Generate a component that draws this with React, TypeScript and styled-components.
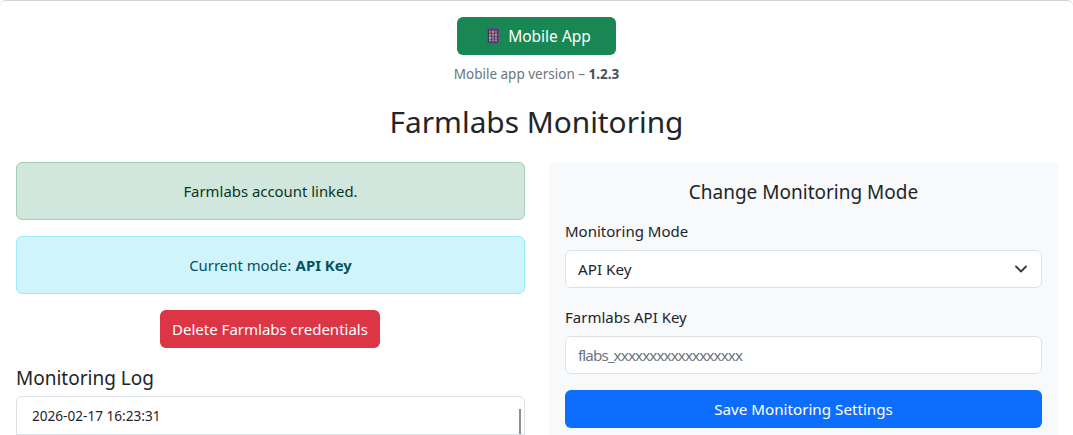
import React from "react";
import styled, { createGlobalStyle } from "styled-components";

const Global = createGlobalStyle`
  * { box-sizing: border-box; }
  html, body {
    margin: 0;
    height: 435px;
    overflow: hidden;
    background: #fff;
  }
  body {
    font-family: "Noto Sans", "Open Sans", sans-serif;
    font-size: 16px;
    line-height: 24px;
    color: #212529;
  }
`;

const PhoneIcon = () => (
  <svg width="12" height="16" viewBox="0 0 12 16" aria-hidden="true">
    <rect x="0" y="0" width="12" height="16" rx="1.5" fill="#55508a" />
    <rect x="1.2" y="1.6" width="9.6" height="12.8" fill="#3a3560" />
    <rect x="2" y="2.6" width="2.2" height="2.2" fill="#d8607a" />
    <rect x="4.9" y="2.6" width="2.2" height="2.2" fill="#d99a5e" />
    <rect x="7.8" y="2.6" width="2.2" height="2.2" fill="#c25c9a" />
    <rect x="2" y="5.6" width="2.2" height="2.2" fill="#6a9be0" />
    <rect x="4.9" y="5.6" width="2.2" height="2.2" fill="#e3786a" />
    <rect x="7.8" y="5.6" width="2.2" height="2.2" fill="#72b98a" />
    <rect x="2" y="8.6" width="2.2" height="2.2" fill="#d8b04f" />
    <rect x="4.9" y="8.6" width="2.2" height="2.2" fill="#8e7ad0" />
    <rect x="7.8" y="8.6" width="2.2" height="2.2" fill="#e06a6a" />
    <rect x="2" y="11.4" width="2.2" height="2" fill="#7f9ad0" />
    <rect x="4.9" y="11.4" width="2.2" height="2" fill="#c9708a" />
    <rect x="7.8" y="11.4" width="2.2" height="2" fill="#6fae9a" />
  </svg>
);

const Chevron = () => (
  <svg width="16" height="16" viewBox="0 0 16 16" aria-hidden="true">
    <path d="M3 5.5l5 5 5-5" fill="none" stroke="#343a40" strokeWidth="1.8" strokeLinecap="round" strokeLinejoin="round" />
  </svg>
);

export default function App() {
  return (
    <>
      <Global />
      <Page>
        <Header>
          <AppButton>
            <PhoneIcon />
            Mobile App
          </AppButton>
          <Version>
            Mobile app version – <strong>1.2.3</strong>
          </Version>
          <Title>Farmlabs Monitoring</Title>
        </Header>
        <Columns>
          <Column>
            <Alert $tone="success">Farmlabs account linked.</Alert>
            <Alert $tone="info">
              Current mode: <strong>API Key</strong>
            </Alert>
            <DeleteRow>
              <DeleteButton $bg="#dc3545">Delete Farmlabs credentials</DeleteButton>
            </DeleteRow>
            <LogTitle>Monitoring Log</LogTitle>
            <LogBox>
              <LogLine>2026-02-17 16:23:31</LogLine>
              <Scrollbar />
            </LogBox>
          </Column>
          <Panel>
            <PanelTitle>Change Monitoring Mode</PanelTitle>
            <Label>Monitoring Mode</Label>
            <SelectBox>
              API Key
              <Chevron />
            </SelectBox>
            <Label>Farmlabs API Key</Label>
            <Input readOnly placeholder="flabs_xxxxxxxxxxxxxxxxxx" />
            <WideButton $bg="#0d6efd">Save Monitoring Settings</WideButton>
          </Panel>
        </Columns>
      </Page>
    </>
  );
}

const Page = styled.div`
  height: 435px;
  overflow: hidden;
  padding: 16px 15px 0 16px;
  border-top: 1px solid #d2d2d2;
  border-radius: 6px 6px 0 0;
`;

const Header = styled.header`
  display: flex;
  flex-direction: column;
  align-items: center;
  margin-right: 1px;
`;

const Button = styled.button<{ $bg: string }>`
  display: inline-flex;
  align-items: center;
  justify-content: center;
  height: 38px;
  padding: 0 13px;
  border: 0;
  border-radius: 6px;
  background: ${(p) => p.$bg};
  color: #fff;
  font: inherit;
  font-size: 15.2px;
`;

const AppButton = styled(Button).attrs({ $bg: "#198754" })`
  width: 159px;
  gap: 9px;
  font-size: 15.5px;
  svg {
    margin-left: 5px;
  }
`;

const DeleteButton = styled(Button)`
  width: 220px;
  padding: 0;
  font-size: 15px;
`;

const Version = styled.p`
  margin: 9px 0 0;
  font-size: 13.5px;
  line-height: 21px;
  color: #6c757d;
  strong {
    color: #495057;
  }
`;

const Title = styled.h1`
  margin: 18px 0 21px;
  font-size: 29.8px;
  line-height: 38px;
  font-weight: 400;
`;

const Columns = styled.div`
  display: grid;
  grid-template-columns: 1fr 1fr;
  gap: 24px;
`;

const Column = styled.div`
  display: flex;
  flex-direction: column;
`;

const Alert = styled.div<{ $tone: "success" | "info" }>`
  height: 58px;
  margin-bottom: 16px;
  display: flex;
  align-items: center;
  justify-content: center;
  gap: 0.3em;
  border: 1px solid ${(p) => (p.$tone === "success" ? "#a3cfbb" : "#9eeaf9")};
  border-radius: 6px;
  background: ${(p) => (p.$tone === "success" ? "#d1e7dd" : "#cff4fc")};
  color: ${(p) => (p.$tone === "success" ? "#0a3622" : "#055160")};
  font-size: 14.9px;
`;

const DeleteRow = styled.div`
  display: flex;
  justify-content: center;
  margin-right: 1px;
`;

const LogTitle = styled.h5`
  margin: 18px 0 6px;
  font-size: 19px;
  line-height: 24px;
  font-weight: 400;
`;

const LogBox = styled.div`
  position: relative;
  height: 39px;
  overflow: hidden;
  padding: 7px 15px;
  border: 1px solid #dee2e6;
  border-radius: 6px 6px 0 0;
  background: #fff;
`;

const LogLine = styled.div`
  font-size: 13.6px;
  line-height: 24px;
`;

const Scrollbar = styled.span`
  position: absolute;
  top: 12px;
  right: 3px;
  bottom: 0;
  width: 2px;
  background: #8f8f8f;
`;

const Panel = styled.section`
  height: 300px;
  padding: 16px;
  border-radius: 6px;
  background: #f8f9fa;
`;

const PanelTitle = styled.h5`
  margin: 0 0 13px;
  font-size: 19px;
  line-height: 28px;
  font-weight: 400;
  text-align: center;
`;

const Label = styled.label`
  display: block;
  margin-bottom: 7px;
  font-size: 15px;
  line-height: 24px;
`;

const SelectBox = styled.div`
  display: flex;
  align-items: center;
  justify-content: space-between;
  height: 38px;
  margin-bottom: 17px;
  padding: 0 12px;
  border: 1px solid #dee2e6;
  border-radius: 6px;
  background: #fff;
  font-size: 15.2px;
`;

const Input = styled.input`
  display: block;
  width: 100%;
  height: 38px;
  margin-bottom: 16px;
  padding: 0 12px;
  border: 1px solid #dee2e6;
  border-radius: 6px;
  background: #fff;
  font: inherit;
  font-size: 15.2px;
  &::placeholder {
    color: #6c757d;
    opacity: 1;
    letter-spacing: -0.9px;
  }
`;

const WideButton = styled(Button)`
  width: 100%;
`;
